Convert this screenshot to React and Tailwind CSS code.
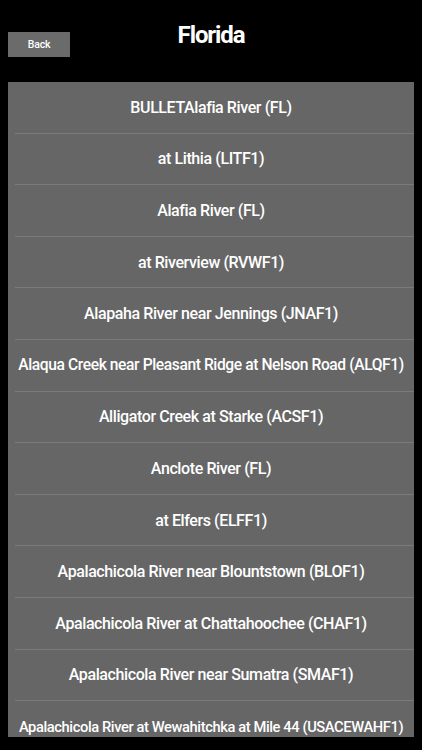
import React from "react"

const rivers = [
    "BULLETAlafia River (FL)",
    "at Lithia (LITF1)",
    "Alafia River (FL)",
    "at Riverview (RVWF1)",
    "Alapaha River near Jennings (JNAF1)",
    "Alaqua Creek near Pleasant Ridge at Nelson Road (ALQF1)",
    "Alligator Creek at Starke (ACSF1)",
    "Anclote River (FL)",
    "at Elfers (ELFF1)",
    "Apalachicola River near Blountstown (BLOF1)",
    "Apalachicola River at Chattahoochee (CHAF1)",
    "Apalachicola River near Sumatra (SMAF1)",
    "Apalachicola River at Wewahitchka at Mile 44 (USACEWAHF1)",
]

const App = () => {
    return (
        <div className="w-[422px] h-[750px] bg-black overflow-hidden" style={{ fontFamily: 'Roboto, "Liberation Sans", sans-serif' }}>
            <div className="relative h-[82px]">
                <button className="absolute left-[8px] top-[32px] w-[62px] h-[25px] bg-[#6b6b6b] text-white text-[10.5px] font-medium tracking-[-0.2px] flex items-center justify-center">
                    Back
                </button>
                <h1 className="pt-[20px] text-center text-white text-[24px] font-bold leading-[30px] tracking-[-1.1px]">Florida</h1>
            </div>
            <div className="mx-[8px] h-[655px] bg-[#666666] overflow-hidden">
                {rivers.map((name, i) => (
                    <div key={i} className="relative h-[51.6px] flex items-center justify-center">
                        <span
                            className={`text-white font-medium whitespace-nowrap tracking-[-0.4px] ${i === rivers.length - 1 ? 'text-[14.7px]' : name.length > 50 ? 'text-[15.6px]' : 'text-[16px]'}`}
                        >
                            {name}
                        </span>
                        <div className="absolute left-[7px] right-0 bottom-0 h-px bg-[#7b7b7b]"></div>
                    </div>
                ))}
            </div>
        </div>
    )
}

export default App
